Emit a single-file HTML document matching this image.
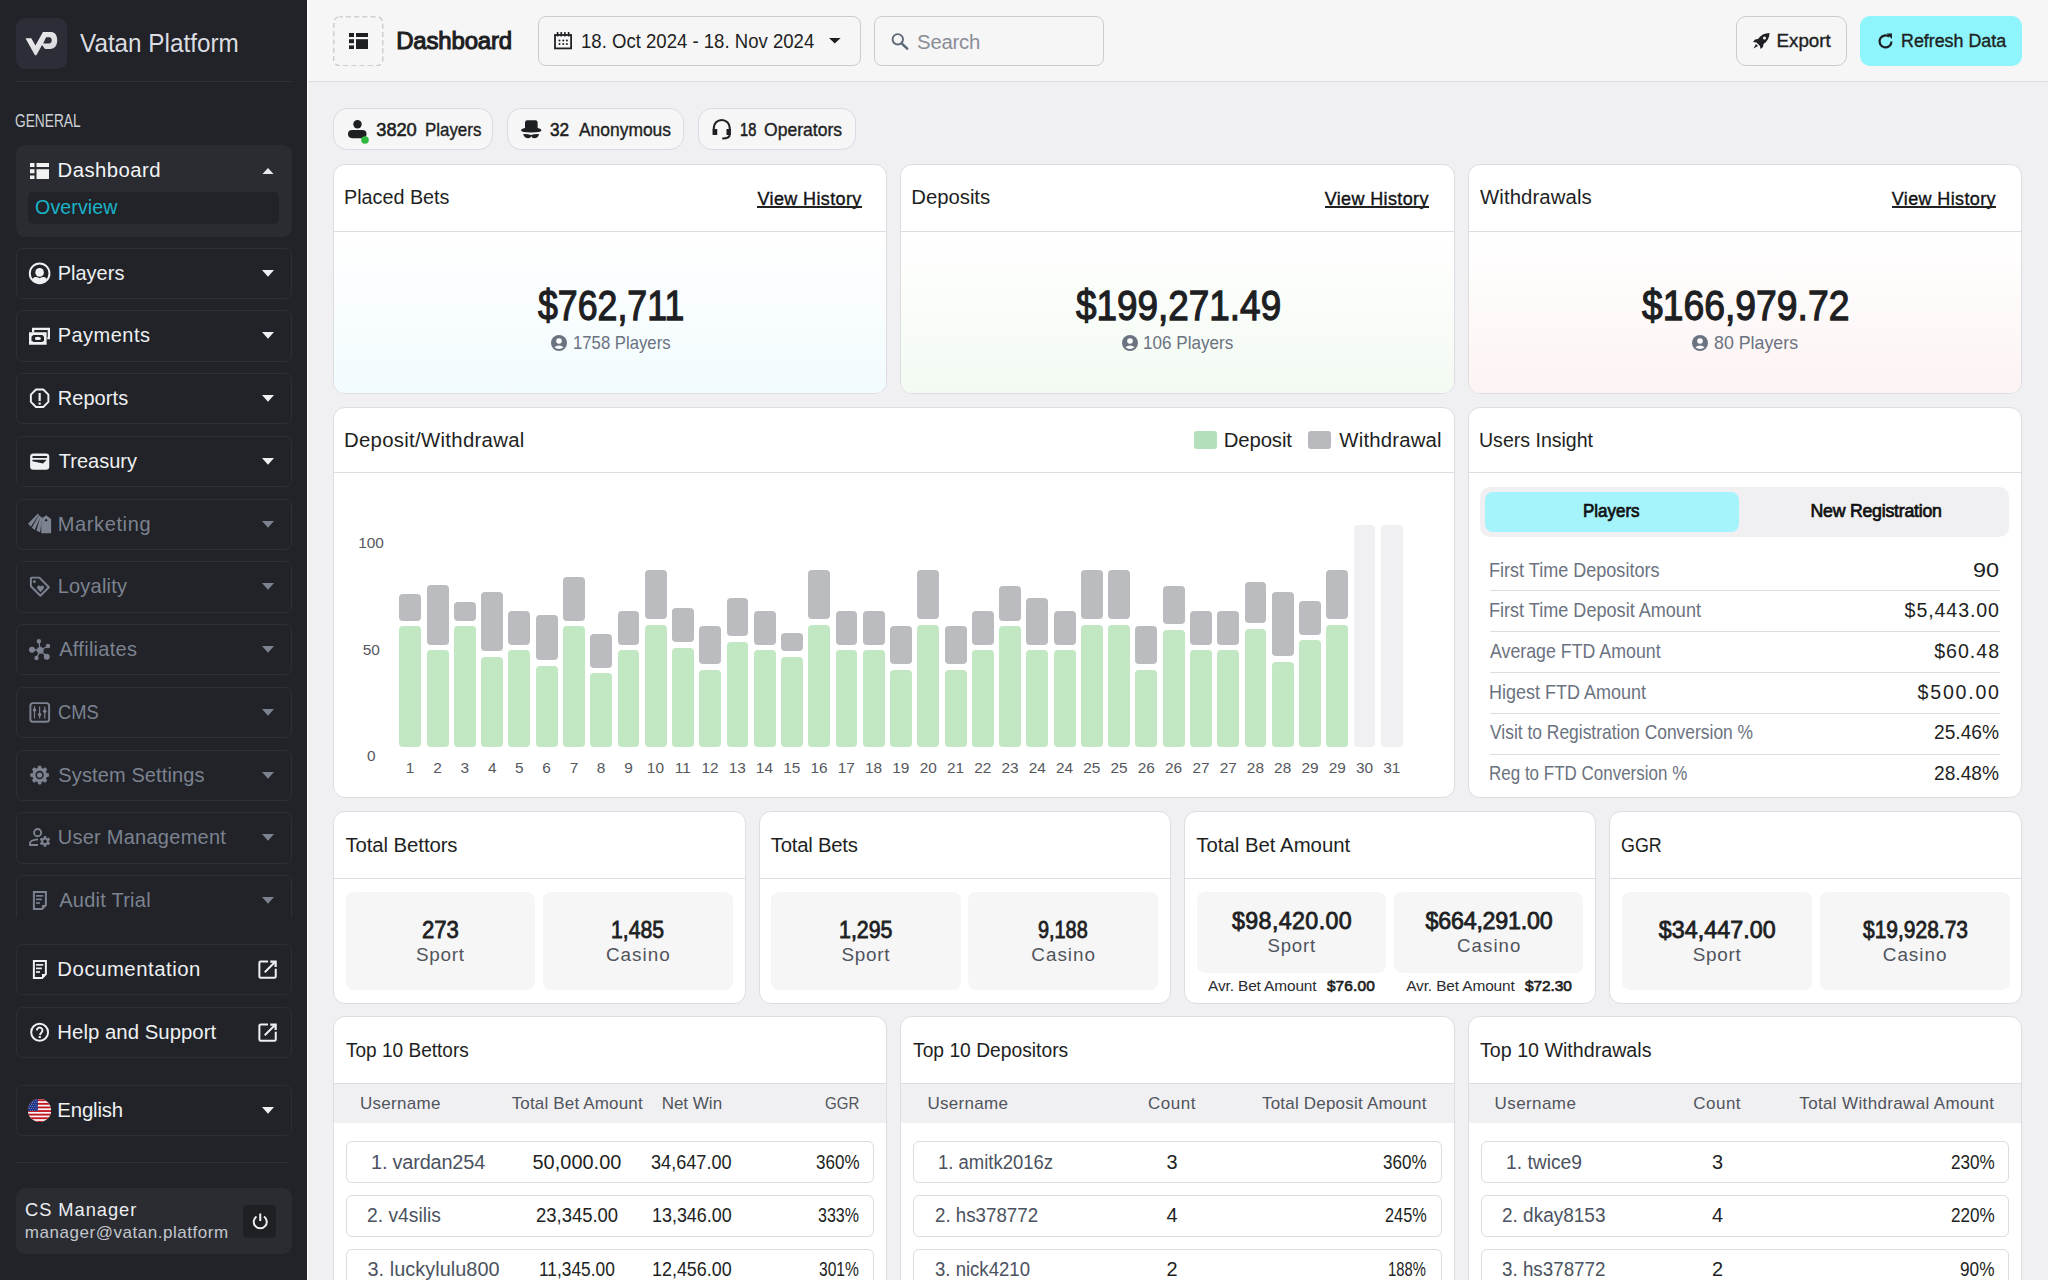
<!DOCTYPE html>
<html><head><meta charset="utf-8"><title>Vatan Platform Dashboard</title>
<style>
html,body{margin:0;padding:0;}
body{width:2048px;height:1280px;overflow:hidden;position:relative;background:#f0f0f2;font-family:"Liberation Sans",sans-serif;}
.a{position:absolute;}
.t{position:absolute;white-space:nowrap;line-height:1;}
</style></head><body>
<div class="a" style="left:0.00px;top:0.00px;width:307.00px;height:1280.00px;background:#212328;"></div>
<div class="a" style="left:16.00px;top:18.00px;width:50.50px;height:50.50px;background:#2b2e36;border-radius:9px;"></div>
<svg class="a" style="left:10.00px;top:12.00px;width:62.00px;height:62.00px;" viewBox="0 0 1280 1280" preserveAspectRatio="none"><defs><linearGradient id="lg" x1="0" y1="0" x2="1" y2="1"><stop offset="0" stop-color="#f0f0f2"/><stop offset="1" stop-color="#d4d4d8"/></linearGradient></defs><path fill-rule="evenodd" fill="url(#lg)" d="M320 540 L440 540 L525 690 L680 415 L850 415 C935 415 975 490 975 590 C975 690 925 762 830 762 L722 762 L662 680 L545 895 L515 895 Z M745 520 L815 520 C848 520 862 548 862 585 C862 625 842 650 808 650 L685 650 Z"/></svg>
<div class="t" style="left:79.88px;top:31.46px;font-size:25.44px;letter-spacing:0.000px;color:#dcdde0;transform:scaleX(0.9540);transform-origin:0 0;">Vatan Platform</div>
<div class="a" style="left:15.50px;top:80.50px;width:276.50px;height:1.00px;background:#2e3036;"></div>
<div class="t" style="left:14.81px;top:113.23px;font-size:17.44px;letter-spacing:0.000px;color:#cfd1d5;transform:scaleX(0.7868);transform-origin:0 0;">GENERAL</div>
<div class="a" style="left:15.50px;top:144.50px;width:276.50px;height:92.00px;background:#2a2c32;border-radius:9px;"></div>
<svg class="a" style="left:30.00px;top:162.50px;width:19.00px;height:16.50px;" viewBox="0 19 16.5" preserveAspectRatio="none"><rect x="0" y="0" width="4.5" height="4" fill="#f2f2f2"/><rect x="0" y="6.25" width="4.5" height="4" fill="#f2f2f2"/><rect x="0" y="12.5" width="4.5" height="4" fill="#f2f2f2"/><rect x="6.5" y="0" width="12.5" height="4" fill="#f2f2f2"/><rect x="6.5" y="6.25" width="12.5" height="10.25" fill="#f2f2f2"/></svg>
<div class="t" style="left:57.62px;top:160.27px;font-size:20.35px;letter-spacing:0.430px;color:#f2f3f5;">Dashboard</div>
<svg class="a" style="left:261.50px;top:167.50px;width:12.00px;height:6.50px;" viewBox="0 12 6.5" preserveAspectRatio="none"><path d="M0 6.5 L6 0 L12 6.5 Z" fill="#e8e9ec"/></svg>
<div class="a" style="left:28.00px;top:192.00px;width:251.00px;height:32.00px;background:#212328;border-radius:5px;"></div>
<div class="t" style="left:35.12px;top:198.14px;font-size:19.62px;letter-spacing:0.080px;color:#19b4c8;">Overview</div>
<div class="a" style="left:0;top:240px;width:307px;height:677px;overflow:hidden;">
<div class="a" style="left:15.5px;top:7.50px;width:276.5px;height:51.25px;border:1px solid #2d2f35;box-sizing:border-box;border-radius:7px;"></div>
<div class="a" style="left:15.5px;top:70.25px;width:276.5px;height:51.25px;border:1px solid #2d2f35;box-sizing:border-box;border-radius:7px;"></div>
<div class="a" style="left:15.5px;top:133.00px;width:276.5px;height:51.25px;border:1px solid #2d2f35;box-sizing:border-box;border-radius:7px;"></div>
<div class="a" style="left:15.5px;top:195.75px;width:276.5px;height:51.25px;border:1px solid #2d2f35;box-sizing:border-box;border-radius:7px;"></div>
<div class="a" style="left:15.5px;top:258.50px;width:276.5px;height:51.25px;border:1px solid #2d2f35;box-sizing:border-box;border-radius:7px;"></div>
<div class="a" style="left:15.5px;top:321.25px;width:276.5px;height:51.25px;border:1px solid #2d2f35;box-sizing:border-box;border-radius:7px;"></div>
<div class="a" style="left:15.5px;top:384.00px;width:276.5px;height:51.25px;border:1px solid #2d2f35;box-sizing:border-box;border-radius:7px;"></div>
<div class="a" style="left:15.5px;top:446.75px;width:276.5px;height:51.25px;border:1px solid #2d2f35;box-sizing:border-box;border-radius:7px;"></div>
<div class="a" style="left:15.5px;top:509.50px;width:276.5px;height:51.25px;border:1px solid #2d2f35;box-sizing:border-box;border-radius:7px;"></div>
<div class="a" style="left:15.5px;top:572.25px;width:276.5px;height:51.25px;border:1px solid #2d2f35;box-sizing:border-box;border-radius:7px;"></div>
<div class="a" style="left:15.5px;top:635.00px;width:276.5px;height:51.25px;border:1px solid #2d2f35;box-sizing:border-box;border-radius:7px;"></div>
</div>
<div class="t" style="left:57.65px;top:262.58px;font-size:19.99px;letter-spacing:0.024px;color:#eef0f2;">Players</div>
<svg class="a" style="left:261.50px;top:269.50px;width:12.00px;height:7.00px;" viewBox="0 12 6.75" preserveAspectRatio="none"><path d="M0 0 L12 0 L6 6.75 Z" fill="#eef0f2"/></svg>
<div class="t" style="left:57.65px;top:325.33px;font-size:19.99px;letter-spacing:0.494px;color:#eef0f2;">Payments</div>
<svg class="a" style="left:261.50px;top:332.25px;width:12.00px;height:7.00px;" viewBox="0 12 6.75" preserveAspectRatio="none"><path d="M0 0 L12 0 L6 6.75 Z" fill="#eef0f2"/></svg>
<div class="t" style="left:57.65px;top:388.08px;font-size:19.99px;letter-spacing:0.100px;color:#eef0f2;">Reports</div>
<svg class="a" style="left:261.50px;top:395.00px;width:12.00px;height:7.00px;" viewBox="0 12 6.75" preserveAspectRatio="none"><path d="M0 0 L12 0 L6 6.75 Z" fill="#eef0f2"/></svg>
<div class="t" style="left:58.85px;top:450.83px;font-size:19.99px;letter-spacing:0.001px;color:#eef0f2;">Treasury</div>
<svg class="a" style="left:261.50px;top:457.75px;width:12.00px;height:7.00px;" viewBox="0 12 6.75" preserveAspectRatio="none"><path d="M0 0 L12 0 L6 6.75 Z" fill="#eef0f2"/></svg>
<div class="t" style="left:57.65px;top:513.58px;font-size:19.99px;letter-spacing:0.645px;color:#7c8290;">Marketing</div>
<svg class="a" style="left:261.50px;top:520.50px;width:12.00px;height:7.00px;" viewBox="0 12 6.75" preserveAspectRatio="none"><path d="M0 0 L12 0 L6 6.75 Z" fill="#7c8290"/></svg>
<div class="t" style="left:57.65px;top:576.33px;font-size:19.99px;letter-spacing:0.228px;color:#7c8290;">Loyality</div>
<svg class="a" style="left:261.50px;top:583.25px;width:12.00px;height:7.00px;" viewBox="0 12 6.75" preserveAspectRatio="none"><path d="M0 0 L12 0 L6 6.75 Z" fill="#7c8290"/></svg>
<div class="t" style="left:59.25px;top:639.08px;font-size:19.99px;letter-spacing:0.284px;color:#7c8290;">Affiliates</div>
<svg class="a" style="left:261.50px;top:646.00px;width:12.00px;height:7.00px;" viewBox="0 12 6.75" preserveAspectRatio="none"><path d="M0 0 L12 0 L6 6.75 Z" fill="#7c8290"/></svg>
<div class="t" style="left:58.33px;top:701.83px;font-size:19.99px;letter-spacing:0.000px;color:#7c8290;transform:scaleX(0.9183);transform-origin:0 0;">CMS</div>
<svg class="a" style="left:261.50px;top:708.75px;width:12.00px;height:7.00px;" viewBox="0 12 6.75" preserveAspectRatio="none"><path d="M0 0 L12 0 L6 6.75 Z" fill="#7c8290"/></svg>
<div class="t" style="left:58.35px;top:764.58px;font-size:19.99px;letter-spacing:0.122px;color:#7c8290;">System Settings</div>
<svg class="a" style="left:261.50px;top:771.50px;width:12.00px;height:7.00px;" viewBox="0 12 6.75" preserveAspectRatio="none"><path d="M0 0 L12 0 L6 6.75 Z" fill="#7c8290"/></svg>
<div class="t" style="left:57.75px;top:827.33px;font-size:19.99px;letter-spacing:0.265px;color:#7c8290;">User Management</div>
<svg class="a" style="left:261.50px;top:834.25px;width:12.00px;height:7.00px;" viewBox="0 12 6.75" preserveAspectRatio="none"><path d="M0 0 L12 0 L6 6.75 Z" fill="#7c8290"/></svg>
<div class="t" style="left:59.25px;top:890.08px;font-size:19.99px;letter-spacing:0.246px;color:#7c8290;">Audit Trial</div>
<svg class="a" style="left:261.50px;top:897.00px;width:12.00px;height:7.00px;" viewBox="0 12 6.75" preserveAspectRatio="none"><path d="M0 0 L12 0 L6 6.75 Z" fill="#7c8290"/></svg>
<svg class="a" style="left:24.00px;top:257.00px;width:32.00px;height:32.00px;" viewBox="0 0 1280 1280" preserveAspectRatio="none"><circle cx="625" cy="655" r="393" fill="none" stroke="#eef0f2" stroke-width="78"/><circle cx="625" cy="615" r="172" fill="#eef0f2"/><path d="M335 885 C420 770 490 790 625 850 C760 790 830 770 915 885 C850 990 740 1050 625 1050 C510 1050 400 990 335 885 Z" fill="#eef0f2"/></svg>
<svg class="a" style="left:24.00px;top:319.00px;width:32.00px;height:32.00px;" viewBox="0 0 1280 1280" preserveAspectRatio="none"><path d="M320 350 H1040 V810 H930 V730 H950 V440 H410 V530 H320 Z" fill="#eef0f2"/><rect x="200" y="530" width="705" height="500" fill="#eef0f2"/><path d="M370 640 L735 640 L800 705 L800 850 L735 915 L370 915 L300 850 L300 705 Z" fill="#212328"/><ellipse cx="555" cy="775" rx="120" ry="65" fill="#eef0f2"/></svg>
<svg class="a" style="left:24.00px;top:382.00px;width:32.00px;height:32.00px;" viewBox="0 0 1280 1280" preserveAspectRatio="none"><path d="M480 300 L770 300 L975 505 L975 795 L770 1000 L480 1000 L275 795 L275 505 Z" fill="none" stroke="#eef0f2" stroke-width="78" stroke-linejoin="round"/><rect x="582" y="440" width="88" height="320" fill="#eef0f2"/><rect x="582" y="820" width="88" height="85" fill="#eef0f2"/></svg>
<svg class="a" style="left:24.00px;top:445.00px;width:32.00px;height:32.00px;" viewBox="0 0 1280 1280" preserveAspectRatio="none"><rect x="245" y="340" width="765" height="645" rx="130" fill="#eef0f2"/><rect x="330" y="440" width="600" height="75" rx="35" fill="#212328"/><path d="M335 592 L905 592 L762 742 L335 648 Z" fill="#212328"/></svg>
<svg class="a" style="left:24.00px;top:508.00px;width:32.00px;height:32.00px;" viewBox="0 0 1280 1280" preserveAspectRatio="none"><path d="M160 630 L545 225 L605 250 L272 745 Z M312 790 L588 300 L668 322 L432 880 Z M495 905 L648 372 L728 345 L645 965 Z" fill="#7c8290"/><path d="M690 440 L882 290 L1085 440 L1085 990 Q1085 1010 1065 1010 L710 1010 Q690 1010 690 990 Z" fill="#7c8290"/><circle cx="885" cy="485" r="48" fill="#212328"/></svg>
<svg class="a" style="left:24.00px;top:570.00px;width:32.00px;height:32.00px;" viewBox="0 0 1280 1280" preserveAspectRatio="none"><path d="M275 340 Q275 305 310 305 L615 305 L995 690 L655 1030 L275 650 Z" fill="none" stroke="#7c8290" stroke-width="78" stroke-linejoin="round"/><circle cx="415" cy="465" r="55" fill="#7c8290"/><path d="M660 885 L540 750 Q495 690 545 640 Q605 590 662 660 Q720 590 778 640 Q828 690 782 750 Z" fill="#7c8290"/></svg>
<svg class="a" style="left:24.00px;top:633.00px;width:32.00px;height:32.00px;" viewBox="0 0 1280 1280" preserveAspectRatio="none"><g stroke="#7c8290" stroke-width="55"><path d="M650 690 L595 330 M650 690 L960 520 M650 690 L320 670 M650 690 L500 1000 M650 690 L910 950"/></g><circle cx="650" cy="690" r="135" fill="#7c8290"/><circle cx="595" cy="330" r="88" fill="#7c8290"/><circle cx="960" cy="520" r="88" fill="#7c8290"/><circle cx="320" cy="670" r="118" fill="#7c8290"/><circle cx="500" cy="1000" r="88" fill="#7c8290"/><circle cx="910" cy="950" r="118" fill="#7c8290"/></svg>
<svg class="a" style="left:24.00px;top:695.00px;width:32.00px;height:32.00px;" viewBox="0 0 1280 1280" preserveAspectRatio="none"><rect x="255" y="325" width="750" height="745" rx="105" fill="none" stroke="#7c8290" stroke-width="78"/><path d="M420 460 V915 M625 470 V915 M830 480 V915" stroke="#7c8290" stroke-width="48" stroke-linecap="round"/><circle cx="420" cy="600" r="68" fill="#7c8290"/><circle cx="625" cy="780" r="68" fill="#7c8290"/><circle cx="830" cy="650" r="72" fill="#7c8290"/></svg>
<svg class="a" style="left:24.00px;top:758.00px;width:32.00px;height:32.00px;" viewBox="0 0 1280 1280" preserveAspectRatio="none"><rect x="550.0" y="305" width="150" height="375" rx="45.0" fill="#7c8290" transform="rotate(0.0 625 680)"/><rect x="550.0" y="305" width="150" height="375" rx="45.0" fill="#7c8290" transform="rotate(45.0 625 680)"/><rect x="550.0" y="305" width="150" height="375" rx="45.0" fill="#7c8290" transform="rotate(90.0 625 680)"/><rect x="550.0" y="305" width="150" height="375" rx="45.0" fill="#7c8290" transform="rotate(135.0 625 680)"/><rect x="550.0" y="305" width="150" height="375" rx="45.0" fill="#7c8290" transform="rotate(180.0 625 680)"/><rect x="550.0" y="305" width="150" height="375" rx="45.0" fill="#7c8290" transform="rotate(225.0 625 680)"/><rect x="550.0" y="305" width="150" height="375" rx="45.0" fill="#7c8290" transform="rotate(270.0 625 680)"/><rect x="550.0" y="305" width="150" height="375" rx="45.0" fill="#7c8290" transform="rotate(315.0 625 680)"/><circle cx="625" cy="680" r="290" fill="#7c8290"/><circle cx="625" cy="680" r="168" fill="#212328"/><circle cx="625" cy="680" r="105" fill="#7c8290"/></svg>
<svg class="a" style="left:24.00px;top:821.00px;width:32.00px;height:32.00px;" viewBox="0 0 1280 1280" preserveAspectRatio="none"><circle cx="545" cy="465" r="142" fill="none" stroke="#7c8290" stroke-width="78"/><path d="M560 735 Q260 760 240 880 L240 960 L560 960" fill="none" stroke="#7c8290" stroke-width="75"/><rect x="785.0" y="600" width="110" height="215" rx="33.0" fill="#7c8290" transform="rotate(0.0 840 815)"/><rect x="785.0" y="600" width="110" height="215" rx="33.0" fill="#7c8290" transform="rotate(60.0 840 815)"/><rect x="785.0" y="600" width="110" height="215" rx="33.0" fill="#7c8290" transform="rotate(120.0 840 815)"/><rect x="785.0" y="600" width="110" height="215" rx="33.0" fill="#7c8290" transform="rotate(180.0 840 815)"/><rect x="785.0" y="600" width="110" height="215" rx="33.0" fill="#7c8290" transform="rotate(240.0 840 815)"/><rect x="785.0" y="600" width="110" height="215" rx="33.0" fill="#7c8290" transform="rotate(300.0 840 815)"/><circle cx="840" cy="815" r="150" fill="#7c8290"/><circle cx="840" cy="815" r="72" fill="#212328"/></svg>
<svg class="a" style="left:24.00px;top:883.00px;width:32.00px;height:32.00px;" viewBox="0 0 1280 1280" preserveAspectRatio="none"><path d="M395 360 H875 V880 L725 1035 H395 Z" fill="none" stroke="#7c8290" stroke-width="80" stroke-linejoin="miter"/><path d="M720 880 H880 L720 1040 Z" fill="#7c8290"/><rect x="480" y="482" width="290" height="66" fill="#7c8290"/><rect x="480" y="622" width="235" height="66" fill="#7c8290"/><rect x="480" y="767" width="160" height="66" fill="#7c8290"/></svg>
<div class="a" style="left:15.50px;top:943.90px;width:276.50px;height:51.50px;border:1px solid #2c2e34;box-sizing:border-box;border-radius:7px;"></div>
<div class="a" style="left:15.50px;top:1006.60px;width:276.50px;height:51.50px;border:1px solid #2c2e34;box-sizing:border-box;border-radius:7px;"></div>
<div class="a" style="left:15.50px;top:1084.50px;width:276.50px;height:51.50px;border:1px solid #2c2e34;box-sizing:border-box;border-radius:7px;"></div>
<svg class="a" style="left:24.00px;top:952.00px;width:32.00px;height:32.00px;" viewBox="0 0 1280 1280" preserveAspectRatio="none"><path d="M395 360 H875 V880 L725 1035 H395 Z" fill="none" stroke="#eef0f2" stroke-width="80" stroke-linejoin="miter"/><path d="M720 880 H880 L720 1040 Z" fill="#eef0f2"/><rect x="480" y="482" width="290" height="66" fill="#eef0f2"/><rect x="480" y="622" width="235" height="66" fill="#eef0f2"/><rect x="480" y="767" width="160" height="66" fill="#eef0f2"/></svg>
<div class="t" style="left:57.37px;top:959.47px;font-size:20.35px;letter-spacing:0.509px;color:#eef0f2;">Documentation</div>
<svg class="a" style="left:24.00px;top:1015.00px;width:32.00px;height:32.00px;" viewBox="0 0 1280 1280" preserveAspectRatio="none"><circle cx="625" cy="690" r="338" fill="none" stroke="#eef0f2" stroke-width="78"/><path d="M515 615 A112 112 0 1 1 700 700 L628 800" fill="none" stroke="#eef0f2" stroke-width="78"/><rect x="585" y="840" width="88" height="80" fill="#eef0f2"/></svg>
<div class="t" style="left:57.37px;top:1021.97px;font-size:20.35px;letter-spacing:0.028px;color:#eef0f2;">Help and Support</div>
<svg class="a" style="left:250.00px;top:952.00px;width:32.00px;height:32.00px;" viewBox="0 0 1280 1280" preserveAspectRatio="none"><path d="M720 375 H430 Q375 375 375 430 V975 Q375 1030 430 1030 H975 Q1030 1030 1030 975 V665" fill="none" stroke="#eef0f2" stroke-width="80"/><path d="M590 810 L990 410" stroke="#eef0f2" stroke-width="80"/><path d="M810 335 H1070 V595 H980 V425 H810 Z" fill="#eef0f2"/></svg>
<svg class="a" style="left:250.00px;top:1015.00px;width:32.00px;height:32.00px;" viewBox="0 0 1280 1280" preserveAspectRatio="none"><path d="M720 375 H430 Q375 375 375 430 V975 Q375 1030 430 1030 H975 Q1030 1030 1030 975 V665" fill="none" stroke="#eef0f2" stroke-width="80"/><path d="M590 810 L990 410" stroke="#eef0f2" stroke-width="80"/><path d="M810 335 H1070 V595 H980 V425 H810 Z" fill="#eef0f2"/></svg>
<svg class="a" style="left:28.00px;top:1099.00px;width:23.00px;height:23.00px;" viewBox="0 0 23 23" preserveAspectRatio="none"><defs><clipPath id="fc"><circle cx="11.6" cy="11.4" r="11.6"/></clipPath></defs><g clip-path="url(#fc)"><rect width="23" height="23" fill="#f6f6f6"/><rect y="0.30" width="23" height="1.85" fill="#c4161f"/><rect y="3.90" width="23" height="1.85" fill="#c4161f"/><rect y="7.50" width="23" height="1.85" fill="#c4161f"/><rect y="11.10" width="23" height="1.85" fill="#c4161f"/><rect y="14.70" width="23" height="1.85" fill="#c4161f"/><rect y="18.30" width="23" height="1.85" fill="#c4161f"/><rect y="21.90" width="23" height="1.85" fill="#c4161f"/><rect width="9.9" height="12" fill="#1f3388"/><circle cx="1.30" cy="1.30" r="0.45" fill="#b8cce0"/><circle cx="2.40" cy="3.30" r="0.45" fill="#b8cce0"/><circle cx="1.30" cy="5.30" r="0.45" fill="#b8cce0"/><circle cx="2.40" cy="7.30" r="0.45" fill="#b8cce0"/><circle cx="1.30" cy="9.30" r="0.45" fill="#b8cce0"/><circle cx="2.40" cy="11.30" r="0.45" fill="#b8cce0"/><circle cx="3.50" cy="1.30" r="0.45" fill="#b8cce0"/><circle cx="4.60" cy="3.30" r="0.45" fill="#b8cce0"/><circle cx="3.50" cy="5.30" r="0.45" fill="#b8cce0"/><circle cx="4.60" cy="7.30" r="0.45" fill="#b8cce0"/><circle cx="3.50" cy="9.30" r="0.45" fill="#b8cce0"/><circle cx="4.60" cy="11.30" r="0.45" fill="#b8cce0"/><circle cx="5.70" cy="1.30" r="0.45" fill="#b8cce0"/><circle cx="6.80" cy="3.30" r="0.45" fill="#b8cce0"/><circle cx="5.70" cy="5.30" r="0.45" fill="#b8cce0"/><circle cx="6.80" cy="7.30" r="0.45" fill="#b8cce0"/><circle cx="5.70" cy="9.30" r="0.45" fill="#b8cce0"/><circle cx="6.80" cy="11.30" r="0.45" fill="#b8cce0"/><circle cx="7.90" cy="1.30" r="0.45" fill="#b8cce0"/><circle cx="9.00" cy="3.30" r="0.45" fill="#b8cce0"/><circle cx="7.90" cy="5.30" r="0.45" fill="#b8cce0"/><circle cx="9.00" cy="7.30" r="0.45" fill="#b8cce0"/><circle cx="7.90" cy="9.30" r="0.45" fill="#b8cce0"/><circle cx="9.00" cy="11.30" r="0.45" fill="#b8cce0"/></g></svg>
<div class="t" style="left:57.37px;top:1100.17px;font-size:20.35px;letter-spacing:-0.166px;color:#eef0f2;">English</div>
<svg class="a" style="left:261.50px;top:1106.50px;width:12.00px;height:7.00px;" viewBox="0 12 6.75" preserveAspectRatio="none"><path d="M0 0 L12 0 L6 6.75 Z" fill="#eef0f2"/></svg>
<div class="a" style="left:15.50px;top:1162.00px;width:272.50px;height:1.00px;background:#2e3036;"></div>
<div class="a" style="left:15.50px;top:1188.00px;width:276.50px;height:66.00px;background:#2a2c32;border-radius:9px;"></div>
<div class="t" style="left:24.98px;top:1201.09px;font-size:18.31px;letter-spacing:0.961px;color:#eceef0;">CS Manager</div>
<div class="t" style="left:24.79px;top:1224.40px;font-size:17.01px;letter-spacing:0.540px;color:#c3c6cc;">manager@vatan.platform</div>
<div class="a" style="left:243.00px;top:1204.60px;width:33.40px;height:33.20px;background:#1e2024;border-radius:4px;"></div>
<svg class="a" style="left:251.50px;top:1213.00px;width:16.50px;height:16.50px;" viewBox="0 16.5 16.5" preserveAspectRatio="none"><path d="M4.5 3.5 A6.5 6.5 0 1 0 12 3.5" fill="none" stroke="#f0f0f0" stroke-width="2"/><path d="M8.25 0.5 V8" stroke="#f0f0f0" stroke-width="2"/></svg>
<div class="a" style="left:307.00px;top:0.00px;width:1741.00px;height:81.00px;background:#f6f6f6;border-bottom:1.5px solid #dcdce2;"></div>
<div class="a" style="left:307.00px;top:0.00px;width:1.00px;height:1280.00px;background:#ffffff;"></div>
<svg class="a" style="left:333.20px;top:15.60px;width:50.50px;height:50.50px;" viewBox="0 0 50.5 50.5" preserveAspectRatio="none"><rect x="0.75" y="0.75" width="49" height="49" rx="6" fill="none" stroke="#cdcdd4" stroke-width="1.5" stroke-dasharray="5 3.2" stroke-dashoffset="2"/></svg>
<svg class="a" style="left:349.00px;top:32.70px;width:19.00px;height:16.40px;" viewBox="0 19 16.4" preserveAspectRatio="none"><rect x="0" y="0" width="5" height="4" fill="#1e1f23"/><rect x="0" y="6.2" width="5" height="4" fill="#1e1f23"/><rect x="0" y="12.4" width="5" height="4" fill="#1e1f23"/><rect x="7" y="0" width="12" height="4" fill="#1e1f23"/><rect x="7" y="6.2" width="12" height="10.2" fill="#1e1f23"/></svg>
<div class="t" style="left:396.22px;top:29.44px;font-size:23.98px;letter-spacing:-0.160px;color:#1e1f23;-webkit-text-stroke:1.08px #1e1f23;">Dashboard</div>
<div class="a" style="left:538.00px;top:15.60px;width:323.00px;height:50.50px;border:1.5px solid #cbcbd2;border-radius:8px;box-sizing:border-box;"></div>
<svg class="a" style="left:545.00px;top:25.00px;width:55.00px;height:32.00px;" viewBox="0 0 2048 1192" preserveAspectRatio="none"><rect x="372" y="372" width="600" height="500" fill="none" stroke="#1e1f23" stroke-width="66"/><rect x="440" y="262" width="60" height="165" rx="20" fill="#1e1f23"/><rect x="575" y="262" width="60" height="165" rx="20" fill="#1e1f23"/><rect x="710" y="262" width="60" height="165" rx="20" fill="#1e1f23"/><rect x="850" y="262" width="60" height="165" rx="20" fill="#1e1f23"/><circle cx="540" cy="575" r="38" fill="#1e1f23"/><circle cx="540" cy="710" r="38" fill="#1e1f23"/><circle cx="680" cy="575" r="38" fill="#1e1f23"/><circle cx="680" cy="710" r="38" fill="#1e1f23"/><circle cx="815" cy="575" r="38" fill="#1e1f23"/><circle cx="815" cy="710" r="38" fill="#1e1f23"/></svg>
<div class="t" style="left:580.81px;top:31.42px;font-size:20.64px;letter-spacing:0.000px;color:#1e1f23;transform:scaleX(0.9001);transform-origin:0 0;">18. Oct 2024 - 18. Nov 2024</div>
<svg class="a" style="left:829.40px;top:38.00px;width:11.60px;height:5.50px;" viewBox="0 11.6 5.5" preserveAspectRatio="none"><path d="M0 0 H11.6 L5.8 5.5Z" fill="#1e1f23"/></svg>
<div class="a" style="left:874.00px;top:15.60px;width:230.00px;height:50.50px;border:1.5px solid #cbcbd2;border-radius:8px;box-sizing:border-box;"></div>
<svg class="a" style="left:889.00px;top:30.50px;width:20.00px;height:20.00px;" viewBox="0 20 20" preserveAspectRatio="none"><circle cx="8.8" cy="8.3" r="5.2" fill="none" stroke="#5f6779" stroke-width="1.9"/><path d="M12.6 12.3 L18.2 17.7" stroke="#5f6779" stroke-width="2.5" stroke-linecap="round"/></svg>
<div class="t" style="left:917.08px;top:31.67px;font-size:20.35px;letter-spacing:-0.233px;color:#8a8d96;">Search</div>
<div class="a" style="left:1736.00px;top:15.50px;width:110.60px;height:50.50px;border:1.5px solid #cbcbd2;border-radius:10px;box-sizing:border-box;"></div>
<svg class="a" style="left:1753.00px;top:33.00px;width:16.50px;height:16.00px;" viewBox="0 16.5 16" preserveAspectRatio="none"><path d="M16.5 0 Q9 0 5 6 L2 6.5 L0 9 L3.5 9.5 L7 13 L7.5 16 L10 14 L10.5 11 Q16.5 7 16.5 0Z" fill="#1e1f23"/><circle cx="11.5" cy="5" r="1.5" fill="#f6f6f6"/><path d="M3 11 L0.5 15.5 L5 13Z" fill="#1e1f23"/></svg>
<div class="t" style="left:1776.49px;top:32.42px;font-size:18.75px;letter-spacing:0.025px;color:#1e1f23;-webkit-text-stroke:0.38px #1e1f23;">Export</div>
<div class="a" style="left:1860.00px;top:15.50px;width:162.00px;height:50.50px;background:#8df5fb;border-radius:10px;"></div>
<svg class="a" style="left:1877.00px;top:33.00px;width:17.00px;height:17.00px;" viewBox="0 17 17" preserveAspectRatio="none"><path d="M14.5 8.5 A6 6 0 1 1 12.2 3.7" fill="none" stroke="#1e1f23" stroke-width="2.2"/><path d="M9.5 0.5 H15 V6 Z" fill="#1e1f23"/></svg>
<div class="t" style="left:1900.75px;top:32.42px;font-size:18.75px;letter-spacing:0.000px;color:#1e1f23;transform:scaleX(0.9514);transform-origin:0 0;-webkit-text-stroke:0.38px #1e1f23;">Refresh Data</div>
<div class="a" style="left:333.30px;top:107.90px;width:160.20px;height:42.60px;background:#f6f6f6;border:1.2px solid #dad9e4;border-radius:14px;box-sizing:border-box;"></div>
<div class="a" style="left:507.30px;top:107.90px;width:176.70px;height:42.60px;background:#f6f6f6;border:1.2px solid #dad9e4;border-radius:14px;box-sizing:border-box;"></div>
<div class="a" style="left:697.80px;top:107.90px;width:158.00px;height:42.60px;background:#f6f6f6;border:1.2px solid #dad9e4;border-radius:14px;box-sizing:border-box;"></div>
<svg class="a" style="left:348.00px;top:120.00px;width:19.00px;height:18.50px;" viewBox="0 19 18.5" preserveAspectRatio="none"><circle cx="9.5" cy="4.2" r="4.2" fill="#1e1f23"/><rect x="0" y="10" width="18.5" height="8.2" rx="4.1" fill="#1e1f23"/></svg>
<svg class="a" style="left:361.00px;top:135.50px;width:8.00px;height:8.00px;" viewBox="0 8 8" preserveAspectRatio="none"><circle cx="4" cy="4" r="3.8" fill="#2eb83d"/></svg>
<div class="t" style="left:376.34px;top:120.59px;font-size:18.31px;letter-spacing:-0.108px;color:#1e1f23;-webkit-text-stroke:0.55px #1e1f23;">3820</div>
<div class="t" style="left:424.62px;top:120.59px;font-size:18.31px;letter-spacing:0.000px;color:#1e1f23;transform:scaleX(0.9235);transform-origin:0 0;-webkit-text-stroke:0.37px #1e1f23;">Players</div>
<svg class="a" style="left:515.00px;top:113.00px;width:32.00px;height:32.00px;" viewBox="0 0 1280 1280" preserveAspectRatio="none"><path d="M400 380 Q400 285 495 285 L810 285 Q905 285 905 380 L905 600 Q1060 640 1060 690 Q1060 780 650 780 Q240 780 240 690 Q240 640 400 600 Z" fill="#1e1f23"/><path d="M325 845 Q480 830 640 880 Q800 830 965 845 Q920 1010 770 1010 Q680 1010 650 930 Q620 1010 530 1010 Q380 1010 325 845 Z" fill="#1e1f23"/></svg>
<div class="t" style="left:550.37px;top:120.59px;font-size:18.31px;letter-spacing:0.000px;color:#1e1f23;transform:scaleX(0.9412);transform-origin:0 0;-webkit-text-stroke:0.55px #1e1f23;">32</div>
<div class="t" style="left:579.37px;top:120.59px;font-size:18.31px;letter-spacing:0.000px;color:#1e1f23;transform:scaleX(0.9520);transform-origin:0 0;-webkit-text-stroke:0.37px #1e1f23;">Anonymous</div>
<svg class="a" style="left:705.00px;top:113.00px;width:32.00px;height:32.00px;" viewBox="0 0 1280 1280" preserveAspectRatio="none"><path d="M350 870 V600 A320 320 0 0 1 990 600 V870" fill="none" stroke="#1e1f23" stroke-width="82"/><rect x="310" y="640" width="180" height="240" fill="#1e1f23"/><rect x="860" y="640" width="170" height="240" fill="#1e1f23"/><path d="M990 850 Q990 1020 690 1020" fill="none" stroke="#1e1f23" stroke-width="82"/></svg>
<div class="t" style="left:740.12px;top:120.59px;font-size:18.31px;letter-spacing:0.000px;color:#1e1f23;transform:scaleX(0.7991);transform-origin:0 0;-webkit-text-stroke:0.55px #1e1f23;">18</div>
<div class="t" style="left:764.39px;top:120.59px;font-size:18.31px;letter-spacing:0.000px;color:#1e1f23;transform:scaleX(0.9588);transform-origin:0 0;-webkit-text-stroke:0.37px #1e1f23;">Operators</div>
<div class="a" style="left:333.30px;top:164.1px;width:554.13px;height:229.8px;background:#fff;border:1px solid #dcdce2;border-radius:12px;box-sizing:border-box;overflow:hidden;"><div class="a" style="left:0;top:65.9px;width:100%;bottom:0;background:linear-gradient(180deg,#ffffff 0%,#f2fbfe 100%);border-top:1px solid #dcdce2;"></div></div>
<div class="t" style="left:344.22px;top:187.47px;font-size:20.35px;letter-spacing:0.000px;color:#1e1f23;transform:scaleX(0.9715);transform-origin:0 0;">Placed Bets</div>
<div class="t" style="left:757.52px;top:189.64px;font-size:18.02px;letter-spacing:0.362px;color:#111214;-webkit-text-stroke:0.36px #111214;">View History</div>
<div class="a" style="left:757.43px;top:206.00px;width:104.10px;height:1.50px;background:#222;"></div>
<div class="t" style="left:537.89px;top:285.49px;font-size:42.30px;letter-spacing:0.000px;color:#1e1f23;transform:scaleX(0.8440);transform-origin:0 0;-webkit-text-stroke:1.27px #1e1f23;">$762,711</div>
<svg class="a" style="left:551.12px;top:334.50px;width:16.20px;height:16.00px;" viewBox="0 16 16" preserveAspectRatio="none"><circle cx="8" cy="8" r="8" fill="#6b7280"/><circle cx="8" cy="6" r="2.8" fill="#fff"/><path d="M3.3 12.3 Q8 8.5 12.7 12.3 Q8 15.5 3.3 12.3Z" fill="#fff"/></svg>
<div class="t" style="left:572.56px;top:333.59px;font-size:18.31px;letter-spacing:0.000px;color:#6b7280;transform:scaleX(0.9137);transform-origin:0 0;">1758 Players</div>
<div class="a" style="left:900.43px;top:164.1px;width:554.14px;height:229.8px;background:#fff;border:1px solid #dcdce2;border-radius:12px;box-sizing:border-box;overflow:hidden;"><div class="a" style="left:0;top:65.9px;width:100%;bottom:0;background:linear-gradient(180deg,#ffffff 0%,#f3faf2 100%);border-top:1px solid #dcdce2;"></div></div>
<div class="t" style="left:911.30px;top:187.47px;font-size:20.35px;letter-spacing:-0.045px;color:#1e1f23;">Deposits</div>
<div class="t" style="left:1324.66px;top:189.64px;font-size:18.02px;letter-spacing:0.362px;color:#111214;-webkit-text-stroke:0.36px #111214;">View History</div>
<div class="a" style="left:1324.57px;top:206.00px;width:104.10px;height:1.50px;background:#222;"></div>
<div class="t" style="left:1075.58px;top:285.49px;font-size:42.30px;letter-spacing:0.000px;color:#1e1f23;transform:scaleX(0.8722);transform-origin:0 0;-webkit-text-stroke:1.27px #1e1f23;">$199,271.49</div>
<svg class="a" style="left:1121.95px;top:334.50px;width:16.20px;height:16.00px;" viewBox="0 16 16" preserveAspectRatio="none"><circle cx="8" cy="8" r="8" fill="#6b7280"/><circle cx="8" cy="6" r="2.8" fill="#fff"/><path d="M3.3 12.3 Q8 8.5 12.7 12.3 Q8 15.5 3.3 12.3Z" fill="#fff"/></svg>
<div class="t" style="left:1143.37px;top:333.59px;font-size:18.31px;letter-spacing:0.000px;color:#6b7280;transform:scaleX(0.9336);transform-origin:0 0;">106 Players</div>
<div class="a" style="left:1467.57px;top:164.1px;width:554.13px;height:229.8px;background:#fff;border:1px solid #dcdce2;border-radius:12px;box-sizing:border-box;overflow:hidden;"><div class="a" style="left:0;top:65.9px;width:100%;bottom:0;background:linear-gradient(180deg,#ffffff 0%,#fdf3f3 100%);border-top:1px solid #dcdce2;"></div></div>
<div class="t" style="left:1479.97px;top:187.47px;font-size:20.35px;letter-spacing:0.101px;color:#1e1f23;">Withdrawals</div>
<div class="t" style="left:1891.79px;top:189.64px;font-size:18.02px;letter-spacing:0.362px;color:#111214;-webkit-text-stroke:0.36px #111214;">View History</div>
<div class="a" style="left:1891.70px;top:206.00px;width:104.10px;height:1.50px;background:#222;"></div>
<div class="t" style="left:1641.72px;top:285.49px;font-size:42.30px;letter-spacing:0.000px;color:#1e1f23;transform:scaleX(0.8816);transform-origin:0 0;-webkit-text-stroke:1.27px #1e1f23;">$166,979.72</div>
<svg class="a" style="left:1691.93px;top:334.50px;width:16.20px;height:16.00px;" viewBox="0 16 16" preserveAspectRatio="none"><circle cx="8" cy="8" r="8" fill="#6b7280"/><circle cx="8" cy="6" r="2.8" fill="#fff"/><path d="M3.3 12.3 Q8 8.5 12.7 12.3 Q8 15.5 3.3 12.3Z" fill="#fff"/></svg>
<div class="t" style="left:1713.83px;top:333.59px;font-size:18.31px;letter-spacing:0.000px;color:#6b7280;transform:scaleX(0.9721);transform-origin:0 0;">80 Players</div>
<div class="a" style="left:333.30px;top:407.10px;width:1121.27px;height:391.40px;background:#fff;border:1px solid #dcdce2;border-radius:12px;box-sizing:border-box;overflow:hidden;"><div class="a" style="left:0;top:64.20px;width:100%;height:1px;background:#dcdce2;"></div></div>
<div class="t" style="left:343.97px;top:430.17px;font-size:20.35px;letter-spacing:0.303px;color:#1e1f23;">Deposit/Withdrawal</div>
<div class="a" style="left:1194.00px;top:431.25px;width:22.90px;height:17.75px;background:#b3dfba;border-radius:3px;"></div>
<div class="t" style="left:1223.67px;top:430.17px;font-size:20.35px;letter-spacing:-0.109px;color:#1e1f23;">Deposit</div>
<div class="a" style="left:1308.00px;top:431.25px;width:23.00px;height:17.75px;background:#b9babd;border-radius:3px;"></div>
<div class="t" style="left:1339.30px;top:430.17px;font-size:20.35px;letter-spacing:0.189px;color:#1e1f23;">Withdrawal</div>
<div class="t" style="left:358.17px;top:535.45px;font-size:15.41px;letter-spacing:0.000px;color:#55575d;">100</div>
<div class="t" style="left:362.71px;top:641.75px;font-size:15.41px;letter-spacing:0.000px;color:#55575d;">50</div>
<div class="t" style="left:366.99px;top:747.75px;font-size:15.41px;letter-spacing:0.000px;color:#55575d;">0</div>
<div class="a" style="left:399.40px;top:626.20px;width:21.90px;height:121.10px;background:#c1e7c3;border-radius:4px;"></div>
<div class="a" style="left:399.40px;top:594.10px;width:21.90px;height:26.60px;background:#bbbcbf;border-radius:4px;"></div>
<div class="t" style="left:405.84px;top:760.45px;font-size:15.41px;letter-spacing:0.000px;color:#55575d;">1</div>
<div class="a" style="left:426.66px;top:650.20px;width:21.90px;height:97.10px;background:#c1e7c3;border-radius:4px;"></div>
<div class="a" style="left:426.66px;top:585.10px;width:21.90px;height:59.80px;background:#bbbcbf;border-radius:4px;"></div>
<div class="t" style="left:433.34px;top:760.45px;font-size:15.41px;letter-spacing:0.000px;color:#55575d;">2</div>
<div class="a" style="left:453.92px;top:626.20px;width:21.90px;height:121.10px;background:#c1e7c3;border-radius:4px;"></div>
<div class="a" style="left:453.92px;top:602.00px;width:21.90px;height:18.70px;background:#bbbcbf;border-radius:4px;"></div>
<div class="t" style="left:460.60px;top:760.45px;font-size:15.41px;letter-spacing:0.000px;color:#55575d;">3</div>
<div class="a" style="left:481.19px;top:656.90px;width:21.90px;height:90.40px;background:#c1e7c3;border-radius:4px;"></div>
<div class="a" style="left:481.19px;top:591.50px;width:21.90px;height:59.80px;background:#bbbcbf;border-radius:4px;"></div>
<div class="t" style="left:487.94px;top:760.45px;font-size:15.41px;letter-spacing:0.000px;color:#55575d;">4</div>
<div class="a" style="left:508.45px;top:650.30px;width:21.90px;height:97.00px;background:#c1e7c3;border-radius:4px;"></div>
<div class="a" style="left:508.45px;top:610.80px;width:21.90px;height:34.10px;background:#bbbcbf;border-radius:4px;"></div>
<div class="t" style="left:515.12px;top:760.45px;font-size:15.41px;letter-spacing:0.000px;color:#55575d;">5</div>
<div class="a" style="left:535.71px;top:665.70px;width:21.90px;height:81.60px;background:#c1e7c3;border-radius:4px;"></div>
<div class="a" style="left:535.71px;top:614.50px;width:21.90px;height:45.80px;background:#bbbcbf;border-radius:4px;"></div>
<div class="t" style="left:542.31px;top:760.45px;font-size:15.41px;letter-spacing:0.000px;color:#55575d;">6</div>
<div class="a" style="left:562.97px;top:626.20px;width:21.90px;height:121.10px;background:#c1e7c3;border-radius:4px;"></div>
<div class="a" style="left:562.97px;top:577.40px;width:21.90px;height:43.30px;background:#bbbcbf;border-radius:4px;"></div>
<div class="t" style="left:569.65px;top:760.45px;font-size:15.41px;letter-spacing:0.000px;color:#55575d;">7</div>
<div class="a" style="left:590.23px;top:673.40px;width:21.90px;height:73.90px;background:#c1e7c3;border-radius:4px;"></div>
<div class="a" style="left:590.23px;top:633.70px;width:21.90px;height:34.30px;background:#bbbcbf;border-radius:4px;"></div>
<div class="t" style="left:596.87px;top:760.45px;font-size:15.41px;letter-spacing:0.000px;color:#55575d;">8</div>
<div class="a" style="left:617.50px;top:650.30px;width:21.90px;height:97.00px;background:#c1e7c3;border-radius:4px;"></div>
<div class="a" style="left:617.50px;top:610.80px;width:21.90px;height:34.10px;background:#bbbcbf;border-radius:4px;"></div>
<div class="t" style="left:624.17px;top:760.45px;font-size:15.41px;letter-spacing:0.000px;color:#55575d;">9</div>
<div class="a" style="left:644.76px;top:624.65px;width:21.90px;height:122.65px;background:#c1e7c3;border-radius:4px;"></div>
<div class="a" style="left:644.76px;top:569.70px;width:21.90px;height:49.70px;background:#bbbcbf;border-radius:4px;"></div>
<div class="t" style="left:646.85px;top:760.45px;font-size:15.41px;letter-spacing:0.000px;color:#55575d;">10</div>
<div class="a" style="left:672.02px;top:647.70px;width:21.90px;height:99.60px;background:#c1e7c3;border-radius:4px;"></div>
<div class="a" style="left:672.02px;top:608.10px;width:21.90px;height:34.20px;background:#bbbcbf;border-radius:4px;"></div>
<div class="t" style="left:674.77px;top:760.45px;font-size:15.41px;letter-spacing:0.000px;color:#55575d;">11</div>
<div class="a" style="left:699.28px;top:669.70px;width:21.90px;height:77.60px;background:#c1e7c3;border-radius:4px;"></div>
<div class="a" style="left:699.28px;top:626.20px;width:21.90px;height:38.20px;background:#bbbcbf;border-radius:4px;"></div>
<div class="t" style="left:701.49px;top:760.45px;font-size:15.41px;letter-spacing:0.000px;color:#55575d;">12</div>
<div class="a" style="left:726.54px;top:641.50px;width:21.90px;height:105.80px;background:#c1e7c3;border-radius:4px;"></div>
<div class="a" style="left:726.54px;top:598.00px;width:21.90px;height:37.90px;background:#bbbcbf;border-radius:4px;"></div>
<div class="t" style="left:728.67px;top:760.45px;font-size:15.41px;letter-spacing:0.000px;color:#55575d;">13</div>
<div class="a" style="left:753.81px;top:650.20px;width:21.90px;height:97.10px;background:#c1e7c3;border-radius:4px;"></div>
<div class="a" style="left:753.81px;top:610.80px;width:21.90px;height:34.10px;background:#bbbcbf;border-radius:4px;"></div>
<div class="t" style="left:755.86px;top:760.45px;font-size:15.41px;letter-spacing:0.000px;color:#55575d;">14</div>
<div class="a" style="left:781.07px;top:656.90px;width:21.90px;height:90.40px;background:#c1e7c3;border-radius:4px;"></div>
<div class="a" style="left:781.07px;top:632.50px;width:21.90px;height:18.80px;background:#bbbcbf;border-radius:4px;"></div>
<div class="t" style="left:783.20px;top:760.45px;font-size:15.41px;letter-spacing:0.000px;color:#55575d;">15</div>
<div class="a" style="left:808.33px;top:624.65px;width:21.90px;height:122.65px;background:#c1e7c3;border-radius:4px;"></div>
<div class="a" style="left:808.33px;top:569.70px;width:21.90px;height:49.70px;background:#bbbcbf;border-radius:4px;"></div>
<div class="t" style="left:810.46px;top:760.45px;font-size:15.41px;letter-spacing:0.000px;color:#55575d;">16</div>
<div class="a" style="left:835.59px;top:650.20px;width:21.90px;height:97.10px;background:#c1e7c3;border-radius:4px;"></div>
<div class="a" style="left:835.59px;top:610.80px;width:21.90px;height:34.10px;background:#bbbcbf;border-radius:4px;"></div>
<div class="t" style="left:837.80px;top:760.45px;font-size:15.41px;letter-spacing:0.000px;color:#55575d;">17</div>
<div class="a" style="left:862.85px;top:650.20px;width:21.90px;height:97.10px;background:#c1e7c3;border-radius:4px;"></div>
<div class="a" style="left:862.85px;top:610.80px;width:21.90px;height:34.10px;background:#bbbcbf;border-radius:4px;"></div>
<div class="t" style="left:864.98px;top:760.45px;font-size:15.41px;letter-spacing:0.000px;color:#55575d;">18</div>
<div class="a" style="left:890.12px;top:669.70px;width:21.90px;height:77.60px;background:#c1e7c3;border-radius:4px;"></div>
<div class="a" style="left:890.12px;top:626.20px;width:21.90px;height:38.20px;background:#bbbcbf;border-radius:4px;"></div>
<div class="t" style="left:892.28px;top:760.45px;font-size:15.41px;letter-spacing:0.000px;color:#55575d;">19</div>
<div class="a" style="left:917.38px;top:624.65px;width:21.90px;height:122.65px;background:#c1e7c3;border-radius:4px;"></div>
<div class="a" style="left:917.38px;top:569.70px;width:21.90px;height:49.70px;background:#bbbcbf;border-radius:4px;"></div>
<div class="t" style="left:919.66px;top:760.45px;font-size:15.41px;letter-spacing:0.000px;color:#55575d;">20</div>
<div class="a" style="left:944.64px;top:669.70px;width:21.90px;height:77.60px;background:#c1e7c3;border-radius:4px;"></div>
<div class="a" style="left:944.64px;top:626.20px;width:21.90px;height:38.20px;background:#bbbcbf;border-radius:4px;"></div>
<div class="t" style="left:947.00px;top:760.45px;font-size:15.41px;letter-spacing:0.000px;color:#55575d;">21</div>
<div class="a" style="left:971.90px;top:650.20px;width:21.90px;height:97.10px;background:#c1e7c3;border-radius:4px;"></div>
<div class="a" style="left:971.90px;top:610.80px;width:21.90px;height:34.10px;background:#bbbcbf;border-radius:4px;"></div>
<div class="t" style="left:974.30px;top:760.45px;font-size:15.41px;letter-spacing:0.000px;color:#55575d;">22</div>
<div class="a" style="left:999.16px;top:626.20px;width:21.90px;height:121.10px;background:#c1e7c3;border-radius:4px;"></div>
<div class="a" style="left:999.16px;top:586.40px;width:21.90px;height:34.30px;background:#bbbcbf;border-radius:4px;"></div>
<div class="t" style="left:1001.49px;top:760.45px;font-size:15.41px;letter-spacing:0.000px;color:#55575d;">23</div>
<div class="a" style="left:1026.43px;top:650.20px;width:21.90px;height:97.10px;background:#c1e7c3;border-radius:4px;"></div>
<div class="a" style="left:1026.43px;top:598.00px;width:21.90px;height:46.90px;background:#bbbcbf;border-radius:4px;"></div>
<div class="t" style="left:1028.67px;top:760.45px;font-size:15.41px;letter-spacing:0.000px;color:#55575d;">24</div>
<div class="a" style="left:1053.69px;top:650.20px;width:21.90px;height:97.10px;background:#c1e7c3;border-radius:4px;"></div>
<div class="a" style="left:1053.69px;top:610.80px;width:21.90px;height:34.10px;background:#bbbcbf;border-radius:4px;"></div>
<div class="t" style="left:1055.93px;top:760.45px;font-size:15.41px;letter-spacing:0.000px;color:#55575d;">24</div>
<div class="a" style="left:1080.95px;top:624.65px;width:21.90px;height:122.65px;background:#c1e7c3;border-radius:4px;"></div>
<div class="a" style="left:1080.95px;top:569.70px;width:21.90px;height:49.70px;background:#bbbcbf;border-radius:4px;"></div>
<div class="t" style="left:1083.27px;top:760.45px;font-size:15.41px;letter-spacing:0.000px;color:#55575d;">25</div>
<div class="a" style="left:1108.21px;top:624.65px;width:21.90px;height:122.65px;background:#c1e7c3;border-radius:4px;"></div>
<div class="a" style="left:1108.21px;top:569.70px;width:21.90px;height:49.70px;background:#bbbcbf;border-radius:4px;"></div>
<div class="t" style="left:1110.53px;top:760.45px;font-size:15.41px;letter-spacing:0.000px;color:#55575d;">25</div>
<div class="a" style="left:1135.47px;top:669.60px;width:21.90px;height:77.70px;background:#c1e7c3;border-radius:4px;"></div>
<div class="a" style="left:1135.47px;top:626.10px;width:21.90px;height:38.30px;background:#bbbcbf;border-radius:4px;"></div>
<div class="t" style="left:1137.80px;top:760.45px;font-size:15.41px;letter-spacing:0.000px;color:#55575d;">26</div>
<div class="a" style="left:1162.74px;top:629.90px;width:21.90px;height:117.40px;background:#c1e7c3;border-radius:4px;"></div>
<div class="a" style="left:1162.74px;top:586.40px;width:21.90px;height:38.00px;background:#bbbcbf;border-radius:4px;"></div>
<div class="t" style="left:1165.06px;top:760.45px;font-size:15.41px;letter-spacing:0.000px;color:#55575d;">26</div>
<div class="a" style="left:1190.00px;top:650.10px;width:21.90px;height:97.20px;background:#c1e7c3;border-radius:4px;"></div>
<div class="a" style="left:1190.00px;top:610.80px;width:21.90px;height:34.10px;background:#bbbcbf;border-radius:4px;"></div>
<div class="t" style="left:1192.40px;top:760.45px;font-size:15.41px;letter-spacing:0.000px;color:#55575d;">27</div>
<div class="a" style="left:1217.26px;top:650.10px;width:21.90px;height:97.20px;background:#c1e7c3;border-radius:4px;"></div>
<div class="a" style="left:1217.26px;top:610.80px;width:21.90px;height:34.10px;background:#bbbcbf;border-radius:4px;"></div>
<div class="t" style="left:1219.66px;top:760.45px;font-size:15.41px;letter-spacing:0.000px;color:#55575d;">27</div>
<div class="a" style="left:1244.52px;top:628.80px;width:21.90px;height:118.50px;background:#c1e7c3;border-radius:4px;"></div>
<div class="a" style="left:1244.52px;top:582.40px;width:21.90px;height:40.70px;background:#bbbcbf;border-radius:4px;"></div>
<div class="t" style="left:1246.84px;top:760.45px;font-size:15.41px;letter-spacing:0.000px;color:#55575d;">28</div>
<div class="a" style="left:1271.78px;top:662.10px;width:21.90px;height:85.20px;background:#c1e7c3;border-radius:4px;"></div>
<div class="a" style="left:1271.78px;top:591.60px;width:21.90px;height:64.90px;background:#bbbcbf;border-radius:4px;"></div>
<div class="t" style="left:1274.11px;top:760.45px;font-size:15.41px;letter-spacing:0.000px;color:#55575d;">28</div>
<div class="a" style="left:1299.05px;top:640.20px;width:21.90px;height:107.10px;background:#c1e7c3;border-radius:4px;"></div>
<div class="a" style="left:1299.05px;top:600.60px;width:21.90px;height:34.20px;background:#bbbcbf;border-radius:4px;"></div>
<div class="t" style="left:1301.41px;top:760.45px;font-size:15.41px;letter-spacing:0.000px;color:#55575d;">29</div>
<div class="a" style="left:1326.31px;top:624.60px;width:21.90px;height:122.70px;background:#c1e7c3;border-radius:4px;"></div>
<div class="a" style="left:1326.31px;top:569.70px;width:21.90px;height:49.70px;background:#bbbcbf;border-radius:4px;"></div>
<div class="t" style="left:1328.67px;top:760.45px;font-size:15.41px;letter-spacing:0.000px;color:#55575d;">29</div>
<div class="a" style="left:1353.57px;top:524.90px;width:21.90px;height:222.40px;background:#f0f0f2;border-radius:4px;"></div>
<div class="t" style="left:1355.93px;top:760.45px;font-size:15.41px;letter-spacing:0.000px;color:#55575d;">30</div>
<div class="a" style="left:1380.83px;top:524.90px;width:21.90px;height:222.40px;background:#f0f0f2;border-radius:4px;"></div>
<div class="t" style="left:1383.27px;top:760.45px;font-size:15.41px;letter-spacing:0.000px;color:#55575d;">31</div>
<div class="a" style="left:1467.57px;top:407.10px;width:554.13px;height:391.40px;background:#fff;border:1px solid #dcdce2;border-radius:12px;box-sizing:border-box;overflow:hidden;"><div class="a" style="left:0;top:64.20px;width:100%;height:1px;background:#dcdce2;"></div></div>
<div class="t" style="left:1478.83px;top:430.17px;font-size:20.35px;letter-spacing:0.000px;color:#1e1f23;transform:scaleX(0.9606);transform-origin:0 0;">Users Insight</div>
<div class="a" style="left:1479.70px;top:486.90px;width:529.70px;height:50.60px;background:#f0f0f2;border-radius:10px;"></div>
<div class="a" style="left:1485.00px;top:491.60px;width:254.00px;height:40.60px;background:#a6f4fb;border-radius:8px;"></div>
<div class="t" style="left:1583.33px;top:503.29px;font-size:17.73px;letter-spacing:0.000px;color:#111;transform:scaleX(0.9566);transform-origin:0 0;-webkit-text-stroke:0.71px #111;">Players</div>
<div class="t" style="left:1810.54px;top:503.29px;font-size:17.73px;letter-spacing:-0.238px;color:#111;-webkit-text-stroke:0.71px #111;">New Registration</div>
<div class="t" style="left:1488.86px;top:561.39px;font-size:19.62px;letter-spacing:0.000px;color:#6b7280;transform:scaleX(0.9204);transform-origin:0 0;">First Time Depositors</div>
<div class="t" style="left:1973.14px;top:561.39px;font-size:19.62px;letter-spacing:0.000px;color:#1e1f23;transform:scaleX(1.1974);transform-origin:0 0;">90</div>
<div class="t" style="left:1488.85px;top:600.79px;font-size:19.62px;letter-spacing:0.000px;color:#6b7280;transform:scaleX(0.9220);transform-origin:0 0;">First Time Deposit Amount</div>
<div class="t" style="left:1904.60px;top:600.79px;font-size:19.62px;letter-spacing:0.895px;color:#1e1f23;">$5,443.00</div>
<div class="t" style="left:1490.30px;top:641.89px;font-size:19.62px;letter-spacing:0.000px;color:#6b7280;transform:scaleX(0.9066);transform-origin:0 0;">Average FTD Amount</div>
<div class="t" style="left:1934.20px;top:641.89px;font-size:19.62px;letter-spacing:0.987px;color:#1e1f23;">$60.48</div>
<div class="t" style="left:1488.86px;top:682.69px;font-size:19.62px;letter-spacing:0.000px;color:#6b7280;transform:scaleX(0.9178);transform-origin:0 0;">Higest FTD Amount</div>
<div class="t" style="left:1917.60px;top:682.69px;font-size:19.62px;letter-spacing:1.758px;color:#1e1f23;">$500.00</div>
<div class="t" style="left:1490.21px;top:723.49px;font-size:19.62px;letter-spacing:0.000px;color:#6b7280;transform:scaleX(0.8886);transform-origin:0 0;">Visit to Registration Conversion %</div>
<div class="t" style="left:1933.94px;top:723.49px;font-size:19.62px;letter-spacing:0.000px;color:#1e1f23;transform:scaleX(0.9777);transform-origin:0 0;">25.46%</div>
<div class="t" style="left:1488.94px;top:764.49px;font-size:19.62px;letter-spacing:0.000px;color:#6b7280;transform:scaleX(0.8662);transform-origin:0 0;">Reg to FTD Conversion %</div>
<div class="t" style="left:1933.94px;top:764.49px;font-size:19.62px;letter-spacing:0.000px;color:#1e1f23;transform:scaleX(0.9777);transform-origin:0 0;">28.48%</div>
<div class="a" style="left:1489.70px;top:589.50px;width:510.00px;height:1.00px;background:#dcdce3;"></div>
<div class="a" style="left:1489.70px;top:630.75px;width:510.00px;height:1.00px;background:#dcdce3;"></div>
<div class="a" style="left:1489.70px;top:672.00px;width:510.00px;height:1.00px;background:#dcdce3;"></div>
<div class="a" style="left:1489.70px;top:712.60px;width:510.00px;height:1.00px;background:#dcdce3;"></div>
<div class="a" style="left:1489.70px;top:753.50px;width:510.00px;height:1.00px;background:#dcdce3;"></div>
<div class="a" style="left:333.30px;top:811.30px;width:412.35px;height:192.30px;background:#fff;border:1px solid #dcdce2;border-radius:12px;box-sizing:border-box;overflow:hidden;"><div class="a" style="left:0;top:65.70px;width:100%;height:1px;background:#dcdce2;"></div></div>
<div class="t" style="left:345.49px;top:835.27px;font-size:20.35px;letter-spacing:-0.085px;color:#1e1f23;">Total Bettors</div>
<div class="a" style="left:758.65px;top:811.30px;width:412.35px;height:192.30px;background:#fff;border:1px solid #dcdce2;border-radius:12px;box-sizing:border-box;overflow:hidden;"><div class="a" style="left:0;top:65.70px;width:100%;height:1px;background:#dcdce2;"></div></div>
<div class="t" style="left:770.84px;top:835.27px;font-size:20.35px;letter-spacing:-0.246px;color:#1e1f23;">Total Bets</div>
<div class="a" style="left:1184.00px;top:811.30px;width:412.35px;height:192.30px;background:#fff;border:1px solid #dcdce2;border-radius:12px;box-sizing:border-box;overflow:hidden;"><div class="a" style="left:0;top:65.70px;width:100%;height:1px;background:#dcdce2;"></div></div>
<div class="t" style="left:1196.19px;top:835.27px;font-size:20.35px;letter-spacing:0.018px;color:#1e1f23;">Total Bet Amount</div>
<div class="a" style="left:1609.35px;top:811.30px;width:412.35px;height:192.30px;background:#fff;border:1px solid #dcdce2;border-radius:12px;box-sizing:border-box;overflow:hidden;"><div class="a" style="left:0;top:65.70px;width:100%;height:1px;background:#dcdce2;"></div></div>
<div class="t" style="left:1621.06px;top:835.27px;font-size:20.35px;letter-spacing:0.000px;color:#1e1f23;transform:scaleX(0.8791);transform-origin:0 0;">GGR</div>
<div class="a" style="left:345.60px;top:892.00px;width:189.60px;height:98.10px;background:#f6f6f7;border-radius:8px;"></div>
<div class="t" style="left:421.88px;top:918.91px;font-size:23.26px;letter-spacing:0.000px;color:#1e1f23;transform:scaleX(0.9508);transform-origin:0 0;-webkit-text-stroke:0.81px #1e1f23;">273</div>
<div class="t" style="left:416.05px;top:946.00px;font-size:18.90px;letter-spacing:0.720px;color:#50545c;">Sport</div>
<div class="a" style="left:543.10px;top:892.00px;width:189.60px;height:98.10px;background:#f6f6f7;border-radius:8px;"></div>
<div class="t" style="left:610.98px;top:918.91px;font-size:23.26px;letter-spacing:0.000px;color:#1e1f23;transform:scaleX(0.9133);transform-origin:0 0;-webkit-text-stroke:0.81px #1e1f23;">1,485</div>
<div class="t" style="left:605.96px;top:946.00px;font-size:18.90px;letter-spacing:0.987px;color:#50545c;">Casino</div>
<div class="a" style="left:770.95px;top:892.00px;width:189.60px;height:98.10px;background:#f6f6f7;border-radius:8px;"></div>
<div class="t" style="left:838.67px;top:918.91px;font-size:23.26px;letter-spacing:0.000px;color:#1e1f23;transform:scaleX(0.9186);transform-origin:0 0;-webkit-text-stroke:0.81px #1e1f23;">1,295</div>
<div class="t" style="left:841.40px;top:946.00px;font-size:18.90px;letter-spacing:0.720px;color:#50545c;">Sport</div>
<div class="a" style="left:968.45px;top:892.00px;width:189.60px;height:98.10px;background:#f6f6f7;border-radius:8px;"></div>
<div class="t" style="left:1038.35px;top:918.91px;font-size:23.26px;letter-spacing:0.000px;color:#1e1f23;transform:scaleX(0.8547);transform-origin:0 0;-webkit-text-stroke:0.81px #1e1f23;">9,188</div>
<div class="t" style="left:1031.31px;top:946.00px;font-size:18.90px;letter-spacing:0.987px;color:#50545c;">Casino</div>
<div class="a" style="left:1197.00px;top:892.00px;width:189.20px;height:80.50px;background:#f6f6f7;border-radius:8px;"></div>
<div class="t" style="left:1231.97px;top:909.81px;font-size:23.26px;letter-spacing:0.382px;color:#1e1f23;-webkit-text-stroke:0.81px #1e1f23;">$98,420.00</div>
<div class="t" style="left:1267.46px;top:937.25px;font-size:18.60px;letter-spacing:0.789px;color:#50545c;">Sport</div>
<div class="t" style="left:1208.00px;top:978.15px;font-size:15.41px;letter-spacing:-0.113px;color:#2a2b30;">Avr. Bet Amount</div>
<div class="t" style="left:1326.89px;top:978.15px;font-size:15.41px;letter-spacing:0.151px;color:#1e1f23;-webkit-text-stroke:0.69px #1e1f23;">$76.00</div>
<div class="a" style="left:1394.20px;top:892.00px;width:189.20px;height:80.50px;background:#f6f6f7;border-radius:8px;"></div>
<div class="t" style="left:1425.57px;top:909.81px;font-size:23.26px;letter-spacing:-0.227px;color:#1e1f23;-webkit-text-stroke:0.81px #1e1f23;">$664,291.00</div>
<div class="t" style="left:1457.02px;top:937.25px;font-size:18.60px;letter-spacing:1.103px;color:#50545c;">Casino</div>
<div class="t" style="left:1406.20px;top:978.15px;font-size:15.41px;letter-spacing:-0.113px;color:#2a2b30;">Avr. Bet Amount</div>
<div class="t" style="left:1525.09px;top:978.15px;font-size:15.41px;letter-spacing:-0.089px;color:#1e1f23;-webkit-text-stroke:0.69px #1e1f23;">$72.30</div>
<div class="a" style="left:1622.00px;top:892.00px;width:190.00px;height:98.10px;background:#f6f6f7;border-radius:8px;"></div>
<div class="t" style="left:1658.87px;top:918.91px;font-size:23.26px;letter-spacing:0.048px;color:#1e1f23;-webkit-text-stroke:0.81px #1e1f23;">$34,447.00</div>
<div class="t" style="left:1692.65px;top:945.80px;font-size:18.90px;letter-spacing:0.720px;color:#50545c;">Sport</div>
<div class="a" style="left:1819.70px;top:892.00px;width:190.00px;height:98.10px;background:#f6f6f7;border-radius:8px;"></div>
<div class="t" style="left:1862.51px;top:918.91px;font-size:23.26px;letter-spacing:0.000px;color:#1e1f23;transform:scaleX(0.9022);transform-origin:0 0;-webkit-text-stroke:0.81px #1e1f23;">$19,928.73</div>
<div class="t" style="left:1882.76px;top:945.80px;font-size:18.90px;letter-spacing:0.987px;color:#50545c;">Casino</div>
<div class="a" style="left:333.30px;top:1016.25px;width:554.13px;height:300px;background:#fff;border:1px solid #dcdce2;border-radius:12px;box-sizing:border-box;overflow:hidden;"><div class="a" style="left:0;top:65.75px;width:100%;height:38.50px;background:#f0f0f2;border-top:1px solid #dcdce2;"></div></div>
<div class="t" style="left:345.52px;top:1040.27px;font-size:20.35px;letter-spacing:0.000px;color:#1e1f23;transform:scaleX(0.9360);transform-origin:0 0;">Top 10 Bettors</div>
<div class="a" style="left:346.30px;top:1141.00px;width:528.13px;height:42.40px;border:1px solid #dcdce2;border-radius:6px;box-sizing:border-box;background:#fff;"></div>
<div class="a" style="left:346.30px;top:1194.75px;width:528.13px;height:42.40px;border:1px solid #dcdce2;border-radius:6px;box-sizing:border-box;background:#fff;"></div>
<div class="a" style="left:346.30px;top:1248.50px;width:528.13px;height:42.40px;border:1px solid #dcdce2;border-radius:6px;box-sizing:border-box;background:#fff;"></div>
<div class="a" style="left:900.43px;top:1016.25px;width:554.14px;height:300px;background:#fff;border:1px solid #dcdce2;border-radius:12px;box-sizing:border-box;overflow:hidden;"><div class="a" style="left:0;top:65.75px;width:100%;height:38.50px;background:#f0f0f2;border-top:1px solid #dcdce2;"></div></div>
<div class="t" style="left:912.64px;top:1040.27px;font-size:20.35px;letter-spacing:0.000px;color:#1e1f23;transform:scaleX(0.9466);transform-origin:0 0;">Top 10 Depositors</div>
<div class="a" style="left:913.43px;top:1141.00px;width:528.14px;height:42.40px;border:1px solid #dcdce2;border-radius:6px;box-sizing:border-box;background:#fff;"></div>
<div class="a" style="left:913.43px;top:1194.75px;width:528.14px;height:42.40px;border:1px solid #dcdce2;border-radius:6px;box-sizing:border-box;background:#fff;"></div>
<div class="a" style="left:913.43px;top:1248.50px;width:528.14px;height:42.40px;border:1px solid #dcdce2;border-radius:6px;box-sizing:border-box;background:#fff;"></div>
<div class="a" style="left:1467.57px;top:1016.25px;width:554.13px;height:300px;background:#fff;border:1px solid #dcdce2;border-radius:12px;box-sizing:border-box;overflow:hidden;"><div class="a" style="left:0;top:65.75px;width:100%;height:38.50px;background:#f0f0f2;border-top:1px solid #dcdce2;"></div></div>
<div class="t" style="left:1479.78px;top:1040.27px;font-size:20.35px;letter-spacing:0.000px;color:#1e1f23;transform:scaleX(0.9658);transform-origin:0 0;">Top 10 Withdrawals</div>
<div class="a" style="left:1480.57px;top:1141.00px;width:528.13px;height:42.40px;border:1px solid #dcdce2;border-radius:6px;box-sizing:border-box;background:#fff;"></div>
<div class="a" style="left:1480.57px;top:1194.75px;width:528.13px;height:42.40px;border:1px solid #dcdce2;border-radius:6px;box-sizing:border-box;background:#fff;"></div>
<div class="a" style="left:1480.57px;top:1248.50px;width:528.13px;height:42.40px;border:1px solid #dcdce2;border-radius:6px;box-sizing:border-box;background:#fff;"></div>
<div class="t" style="left:359.92px;top:1094.80px;font-size:17.01px;letter-spacing:0.306px;color:#50545c;">Username</div>
<div class="t" style="left:511.66px;top:1094.80px;font-size:17.01px;letter-spacing:0.163px;color:#50545c;">Total Bet Amount</div>
<div class="t" style="left:661.64px;top:1094.80px;font-size:17.01px;letter-spacing:0.002px;color:#50545c;">Net Win</div>
<div class="t" style="left:825.25px;top:1094.80px;font-size:17.01px;letter-spacing:0.000px;color:#50545c;transform:scaleX(0.8847);transform-origin:0 0;">GGR</div>
<div class="t" style="left:371.01px;top:1152.54px;font-size:19.91px;letter-spacing:-0.182px;color:#4b5260;">1. vardan254</div>
<div class="t" style="left:532.50px;top:1152.54px;font-size:19.91px;letter-spacing:0.035px;color:#1e1f23;">50,000.00</div>
<div class="t" style="left:651.47px;top:1152.54px;font-size:19.91px;letter-spacing:0.000px;color:#1e1f23;transform:scaleX(0.9102);transform-origin:0 0;">34,647.00</div>
<div class="t" style="left:815.72px;top:1152.54px;font-size:19.91px;letter-spacing:0.000px;color:#1e1f23;transform:scaleX(0.8568);transform-origin:0 0;">360%</div>
<div class="t" style="left:367.34px;top:1206.04px;font-size:19.91px;letter-spacing:0.000px;color:#4b5260;transform:scaleX(0.9682);transform-origin:0 0;">2. v4silis</div>
<div class="t" style="left:535.78px;top:1206.04px;font-size:19.91px;letter-spacing:0.000px;color:#1e1f23;transform:scaleX(0.9273);transform-origin:0 0;">23,345.00</div>
<div class="t" style="left:651.66px;top:1206.04px;font-size:19.91px;letter-spacing:0.000px;color:#1e1f23;transform:scaleX(0.8991);transform-origin:0 0;">13,346.00</div>
<div class="t" style="left:818.36px;top:1206.04px;font-size:19.91px;letter-spacing:0.000px;color:#1e1f23;transform:scaleX(0.8043);transform-origin:0 0;">333%</div>
<div class="t" style="left:367.50px;top:1259.54px;font-size:19.91px;letter-spacing:0.033px;color:#4b5260;">3. luckylulu800</div>
<div class="t" style="left:538.70px;top:1259.54px;font-size:19.91px;letter-spacing:0.000px;color:#1e1f23;transform:scaleX(0.8713);transform-origin:0 0;">11,345.00</div>
<div class="t" style="left:651.66px;top:1259.54px;font-size:19.91px;letter-spacing:0.000px;color:#1e1f23;transform:scaleX(0.8991);transform-origin:0 0;">12,456.00</div>
<div class="t" style="left:819.38px;top:1259.54px;font-size:19.91px;letter-spacing:0.000px;color:#1e1f23;transform:scaleX(0.7841);transform-origin:0 0;">301%</div>
<div class="t" style="left:927.42px;top:1094.80px;font-size:17.01px;letter-spacing:0.306px;color:#50545c;">Username</div>
<div class="t" style="left:1147.95px;top:1094.80px;font-size:17.01px;letter-spacing:0.529px;color:#50545c;">Count</div>
<div class="t" style="left:1261.96px;top:1094.80px;font-size:17.01px;letter-spacing:0.205px;color:#50545c;">Total Deposit Amount</div>
<div class="t" style="left:938.21px;top:1152.54px;font-size:19.91px;letter-spacing:0.000px;color:#4b5260;transform:scaleX(0.9278);transform-origin:0 0;">1. amitk2016z</div>
<div class="t" style="left:1166.47px;top:1152.54px;font-size:19.91px;letter-spacing:0.000px;color:#1e1f23;">3</div>
<div class="t" style="left:1382.82px;top:1152.54px;font-size:19.91px;letter-spacing:0.000px;color:#1e1f23;transform:scaleX(0.8548);transform-origin:0 0;">360%</div>
<div class="t" style="left:934.56px;top:1206.04px;font-size:19.91px;letter-spacing:0.000px;color:#4b5260;transform:scaleX(0.9403);transform-origin:0 0;">2. hs378772</div>
<div class="t" style="left:1166.57px;top:1206.04px;font-size:19.91px;letter-spacing:0.000px;color:#1e1f23;">4</div>
<div class="t" style="left:1384.58px;top:1206.04px;font-size:19.91px;letter-spacing:0.000px;color:#1e1f23;transform:scaleX(0.8197);transform-origin:0 0;">245%</div>
<div class="t" style="left:934.76px;top:1259.54px;font-size:19.91px;letter-spacing:0.000px;color:#4b5260;transform:scaleX(0.9326);transform-origin:0 0;">3. nick4210</div>
<div class="t" style="left:1166.47px;top:1259.54px;font-size:19.91px;letter-spacing:0.000px;color:#1e1f23;">2</div>
<div class="t" style="left:1388.39px;top:1259.54px;font-size:19.91px;letter-spacing:0.000px;color:#1e1f23;transform:scaleX(0.7440);transform-origin:0 0;">188%</div>
<div class="t" style="left:1494.52px;top:1094.80px;font-size:17.01px;letter-spacing:0.420px;color:#50545c;">Username</div>
<div class="t" style="left:1693.35px;top:1094.80px;font-size:17.01px;letter-spacing:0.454px;color:#50545c;">Count</div>
<div class="t" style="left:1799.36px;top:1094.80px;font-size:17.01px;letter-spacing:0.344px;color:#50545c;">Total Withdrawal Amount</div>
<div class="t" style="left:1505.85px;top:1152.54px;font-size:19.91px;letter-spacing:0.000px;color:#4b5260;transform:scaleX(0.9676);transform-origin:0 0;">1. twice9</div>
<div class="t" style="left:1711.97px;top:1152.54px;font-size:19.91px;letter-spacing:0.000px;color:#1e1f23;">3</div>
<div class="t" style="left:1950.64px;top:1152.54px;font-size:19.91px;letter-spacing:0.000px;color:#1e1f23;transform:scaleX(0.8603);transform-origin:0 0;">230%</div>
<div class="t" style="left:1502.05px;top:1206.04px;font-size:19.91px;letter-spacing:0.000px;color:#4b5260;transform:scaleX(0.9538);transform-origin:0 0;">2. dkay8153</div>
<div class="t" style="left:1712.07px;top:1206.04px;font-size:19.91px;letter-spacing:0.000px;color:#1e1f23;">4</div>
<div class="t" style="left:1950.64px;top:1206.04px;font-size:19.91px;letter-spacing:0.000px;color:#1e1f23;transform:scaleX(0.8603);transform-origin:0 0;">220%</div>
<div class="t" style="left:1502.25px;top:1259.54px;font-size:19.91px;letter-spacing:0.000px;color:#4b5260;transform:scaleX(0.9441);transform-origin:0 0;">3. hs378772</div>
<div class="t" style="left:1711.97px;top:1259.54px;font-size:19.91px;letter-spacing:0.000px;color:#1e1f23;">2</div>
<div class="t" style="left:1960.02px;top:1259.54px;font-size:19.91px;letter-spacing:0.000px;color:#1e1f23;transform:scaleX(0.8657);transform-origin:0 0;">90%</div>
</body></html>
